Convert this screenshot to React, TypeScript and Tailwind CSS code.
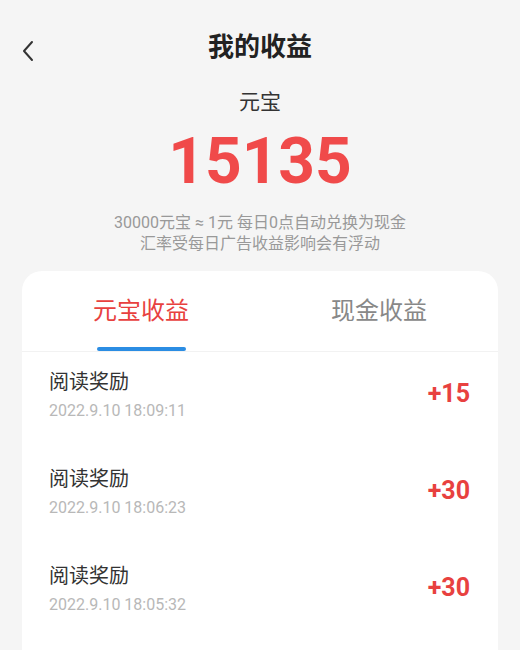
import React, { useState } from 'react';

const RECORDS = [
  { title: '阅读奖励', time: '2022.9.10 18:09:11', amount: 15 },
  { title: '阅读奖励', time: '2022.9.10 18:06:23', amount: 30 },
  { title: '阅读奖励', time: '2022.9.10 18:05:32', amount: 30 },
];

const FONT = { fontFamily: 'Roboto, "Noto Sans CJK SC", sans-serif' };

export default function App() {
  const [tab, setTab] = useState<'coin' | 'cash'>('coin');

  return (
    <div className="w-[520px] h-[650px] overflow-hidden bg-[#f5f5f5] text-[#222]" style={FONT}>
      {/* Header */}
      <div className="relative h-[94px] flex items-center justify-center">
        <button className="absolute left-[17px] top-[36px] p-1">
          <svg width="14" height="22" viewBox="0 0 14 22" fill="none">
            <path d="M11 2 L3 11 L11 20" stroke="#333" strokeWidth="2" strokeLinecap="round" strokeLinejoin="round" />
          </svg>
        </button>
        <h1 className="text-[26px] font-bold text-[#222]">我的收益</h1>
      </div>

      {/* Balance */}
      <div className="flex flex-col items-center">
        <div className="text-[21px] leading-[20px] text-[#333] -mt-[2px]">元宝</div>
        <div className="text-[64px] leading-[64px] font-bold text-[#f04a4a] mt-[18px]">15135</div>
        <div className="mt-[18px] text-[16px] leading-[21px] text-[#999] text-center">
          <p>30000元宝 ≈ 1元 每日0点自动兑换为现金</p>
          <p>汇率受每日广告收益影响会有浮动</p>
        </div>
      </div>

      {/* Card */}
      <div className="mx-[22px] mt-[17px] h-[400px] bg-white rounded-[20px] overflow-hidden">
        <div className="flex border-b border-[#f2f2f2]">
          <button
            onClick={() => setTab('coin')}
            className="flex-1 flex flex-col items-center pt-[24px]"
          >
            <span className={`text-[24px] leading-[32px] ${tab === 'coin' ? 'text-[#e8413f]' : 'text-[#888]'}`}>
              元宝收益
            </span>
            <span className={`mt-[20px] h-[4px] w-[89px] rounded-full ${tab === 'coin' ? 'bg-[#2b8de3]' : 'bg-transparent'}`} />
          </button>
          <button
            onClick={() => setTab('cash')}
            className="flex-1 flex flex-col items-center pt-[24px]"
          >
            <span className={`text-[24px] leading-[32px] ${tab === 'cash' ? 'text-[#e8413f]' : 'text-[#888]'}`}>
              现金收益
            </span>
            <span className={`mt-[20px] h-[4px] w-[89px] rounded-full ${tab === 'cash' ? 'bg-[#2b8de3]' : 'bg-transparent'}`} />
          </button>
        </div>

        <div className="pt-[4px]">
          {RECORDS.map((r, i) => (
            <div key={i} className="flex items-center justify-between pl-[27px] pr-[28px] h-[97px] pb-[20px]">
              <div>
                <div className="text-[20px] leading-[26px] text-[#333]">{r.title}</div>
                <div className="text-[16px] leading-[20px] text-[#b8b8b8] mt-[6px]">{r.time}</div>
              </div>
              <div className="text-[25px] font-bold text-[#e8413f] -mt-[1px]">+{r.amount}</div>
            </div>
          ))}
        </div>
      </div>
    </div>
  );
}
